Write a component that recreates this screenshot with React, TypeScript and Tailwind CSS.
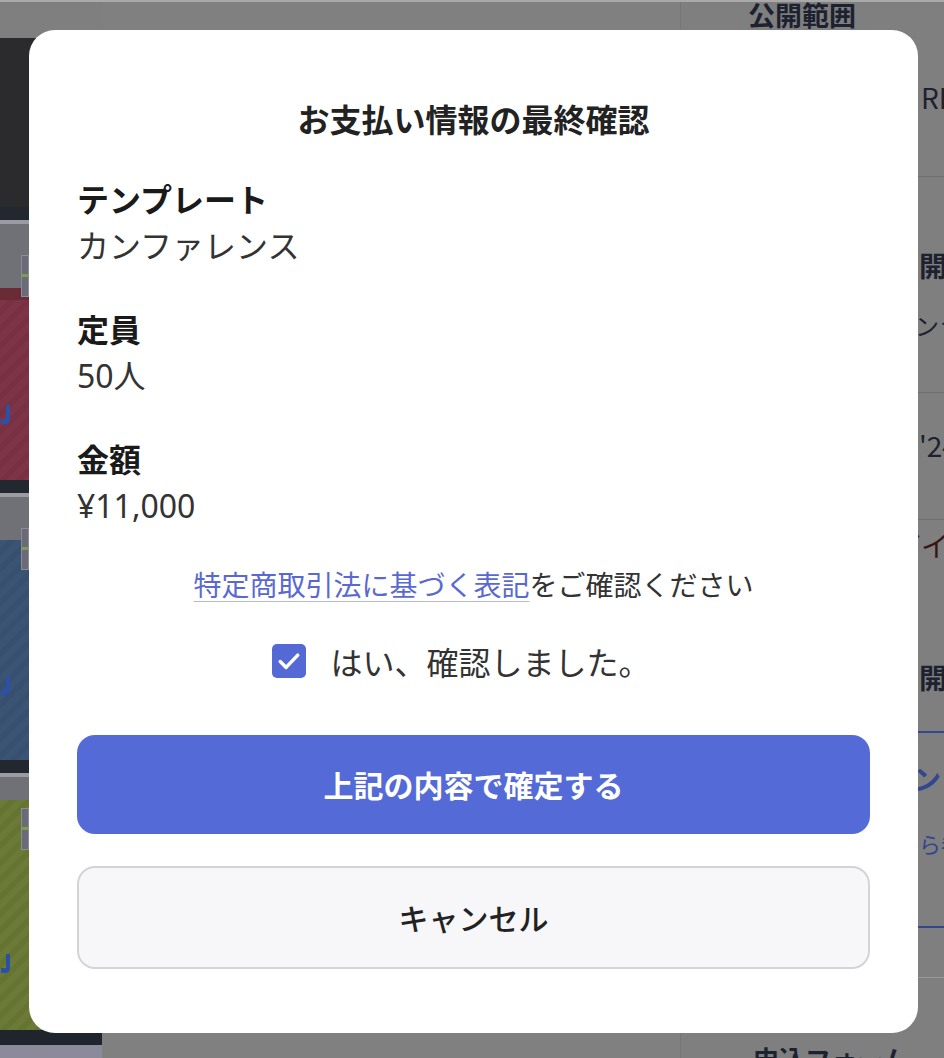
import React from 'react';

const Bar = ({ gray }: { gray: number }) => (
  <div className="relative flex flex-col shrink-0">
    <div className="h-[13px] bg-[#23272f]" />
    <div className="h-[4px] bg-[#9b9ba3]" />
    <div className="bg-[#707177]" style={{ height: gray }} />
    <div className="absolute left-[21px] top-[48px] w-[8px] h-[42px] border border-[#8c8c96] bg-[#6a6a78]">
      <div className="mt-[18px] h-[3px] bg-[#7aa04a]" />
    </div>
  </div>
);

const Tile = ({ tone, height, iconTop }: { tone: 'red' | 'blue' | 'green'; height: number; iconTop: number }) => {
  const toneClass =
    tone === 'red'
      ? 'bg-[repeating-linear-gradient(135deg,#7d3446_0px,#7d3446_6px,#783143_6px,#783143_12px)]'
      : tone === 'blue'
        ? 'bg-[repeating-linear-gradient(135deg,#3b5474_0px,#3b5474_6px,#375070_6px,#375070_12px)]'
        : 'bg-[repeating-linear-gradient(135deg,#6b7a36_0px,#6b7a36_6px,#657431_6px,#657431_12px)]';
  return (
    <div className={`flex flex-col shrink-0 ${toneClass}`} style={{ height }}>
      <div style={{ height: iconTop }} />
      <svg width="16" height="24" viewBox="0 0 16 24">
        <path d="M10 2v14c0 3-2 5-5 5H1v-5h5V2z" fill="#2c4fa8" />
      </svg>
    </div>
  );
};

const Background = () => (
  <div className="flex h-full">
    {/* thumbnails column */}
    <div className="w-[102px] shrink-0 flex flex-col">
      <div className="h-[38px] shrink-0 bg-[#7f7f7f]" />
      <div className="h-[169px] shrink-0 bg-[#2b2b2e]" />
      <Bar gray={64} />
      <div className="h-[12px] shrink-0 bg-[#6a2a36]" />
      <Tile tone="red" height={180} iconTop={103} />
      <Bar gray={43} />
      <Tile tone="blue" height={220} iconTop={134} />
      <Bar gray={23} />
      <Tile tone="green" height={230} iconTop={152} />
      <div className="h-[15px] shrink-0 bg-[#20252d]" />
      <div className="h-[13px] shrink-0 bg-[#8a8a9a]" />
    </div>

    <div className="flex-1 bg-[#808080]" />

    {/* settings panel */}
    <div className="w-[264px] shrink-0 border-l border-[#767676] bg-[#7f7f7f] flex flex-col text-[#1d2230] text-[28px]">
      <div className="h-[30px] shrink-0 pl-[67px] text-[27px] font-bold leading-[30px] whitespace-nowrap">公開範囲</div>
      <div className="h-[147px] shrink-0 border-b border-[#6f6f6f] pt-[50px] pl-[240px] leading-[34px] whitespace-nowrap">RL</div>
      <div className="h-[216px] shrink-0 border-b border-[#6f6f6f] pt-[71px] whitespace-nowrap">
        <div className="pl-[238px] leading-[34px] font-bold">開始日時</div>
        <div className="mt-[26px] pl-[210px] leading-[34px] text-[24px]">オンライン</div>
      </div>
      <div className="h-[127px] shrink-0 border-b border-[#6f6f6f] pt-[35px] pl-[238px] leading-[34px] whitespace-nowrap">'24/10/01</div>
      <div className="flex flex-col shrink-0 pt-[8px] whitespace-nowrap">
        <div className="pl-[212px] leading-[34px] text-[#3a1518]">ガイド</div>
        <div className="mt-[98px] pl-[238px] leading-[34px] font-bold">開催場所</div>
        <div className="mt-[37px] ml-[20px] mr-[-20px] h-[197px] border-y-2 border-[#34468e] text-[#34468e]">
          <div className="mt-[28px] pl-[184px] leading-[34px] font-bold">オンライン</div>
          <div className="mt-[31px] pl-[196px] leading-[34px] text-[22px]">から参加</div>
        </div>
        <div className="mt-[49px] border-t border-[#999999]" />
        <div className="mt-[64px] pl-[72px] leading-[34px] font-bold text-[26px]">申込フォーム</div>
      </div>
    </div>
  </div>
);

const CheckIcon = () => (
  <svg width="28" height="28" viewBox="0 0 24 24" fill="none">
    <path d="M4.5 12.5l5 5L19.5 7" stroke="white" strokeWidth="3" strokeLinecap="round" strokeLinejoin="round" />
  </svg>
);

const Item = ({ label, value }: { label: string; value: string }) => (
  <div className="flex flex-col">
    <div className="text-[32px] leading-[48px] font-bold text-[#1a1a1a]">{label}</div>
    <div className="text-[32px] leading-[48px] text-[#333333] font-['Noto_Sans','Noto_Sans_CJK_JP',sans-serif]">{value}</div>
  </div>
);

export default function App() {
  return (
    <div className="relative w-[944px] h-[1058px] overflow-hidden bg-[#808080] font-['Noto_Sans_CJK_JP','Noto_Sans',sans-serif]">
      <div className="absolute inset-x-0 top-0 h-[2px] bg-[#a9a9a9]" />
      <Background />

      {/* dialog */}
      <div className="absolute left-[29px] top-[30px] w-[889px] h-[1003px] bg-white rounded-[26px] px-12 pt-16 flex flex-col">
        <h1 className="text-center text-[32px] leading-[48px] font-bold text-[#222222]">お支払い情報の最終確認</h1>

        <div className="mt-8 flex flex-col gap-[34px]">
          <Item label="テンプレート" value="カンファレンス" />
          <Item label="定員" value="50人" />
          <Item label="金額" value="¥11,000" />
        </div>

        <p className="mt-8 text-center text-[28px] leading-[44px] text-[#333333]">
          <a className="text-[#5a69d2] underline decoration-[#b3b9ec] decoration-1 underline-offset-[5px]">
            特定商取引法に基づく表記
          </a>
          をご確認ください
        </p>

        <label className="mt-[33px] h-[44px] flex items-center justify-center gap-6 pr-[24px]">
          <span className="w-[34px] h-[34px] rounded-[5px] bg-[#5468d6] flex items-center justify-center">
            <CheckIcon />
          </span>
          <span className="text-[32px] leading-[44px] text-[#333333]">はい、確認しました。</span>
        </label>

        <button className="mt-[52px] h-[99px] w-full rounded-[18px] bg-[#546ad7] text-white text-[30px] font-bold">
          上記の内容で確定する
        </button>
        <button className="mt-[32px] h-[103px] w-full rounded-[18px] border-2 border-[#d4d4d8] bg-[#f7f7f9] text-[#222222] text-[30px] font-medium">
          キャンセル
        </button>
      </div>
    </div>
  );
}
